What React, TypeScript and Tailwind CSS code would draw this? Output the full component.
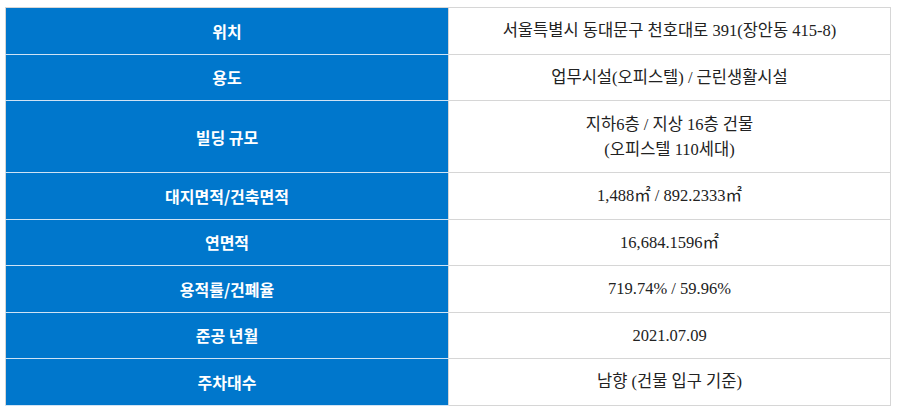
const rows: { label: string; value: string[]; tall?: boolean }[] = [
  { label: '위치', value: ['서울특별시 동대문구 천호대로 391(장안동 415-8)'] },
  { label: '용도', value: ['업무시설(오피스텔) / 근린생활시설'] },
  { label: '빌딩 규모', value: ['지하6층 / 지상 16층 건물', '(오피스텔 110세대)'], tall: true },
  { label: '대지면적/건축면적', value: ['1,488㎡ / 892.2333㎡'] },
  { label: '연면적', value: ['16,684.1596㎡'] },
  { label: '용적률/건폐율', value: ['719.74% / 59.96%'] },
  { label: '준공 년월', value: ['2021.07.09'] },
  { label: '주차대수', value: ['남향 (건물 입구 기준)'] },
];

export default function App() {
  return (
    <div className="bg-white w-[897px] h-[414px] pt-[7px] pl-[5px]">
      <table className="w-[886px] border-collapse border border-[#d6d6d6]">
        <tbody>
          {rows.map((row) => (
            <tr key={row.label} className={row.tall ? 'h-[72px]' : 'h-[46.5px]'}>
              <th className="w-[443px] bg-[#0077cc] border-b border-[#cfe3f5] text-center text-[16px] font-bold text-white font-['Noto_Sans_CJK_KR',sans-serif] p-0">
                {row.label}
              </th>
              <td className="border border-[#d6d6d6] text-center text-[16.5px] leading-[25px] text-[#222] font-['Liberation_Serif','Noto_Sans_CJK_KR',serif] p-0">
                {row.value.map((line) => (
                  <div key={line}>{line}</div>
                ))}
              </td>
            </tr>
          ))}
        </tbody>
      </table>
    </div>
  );
}
